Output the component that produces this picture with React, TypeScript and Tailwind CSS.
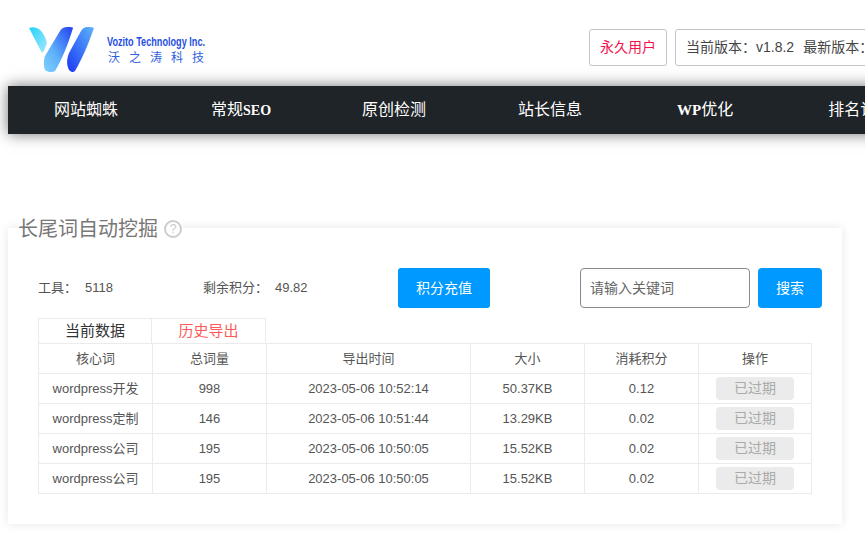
import React from 'react';

const navItems = [
  { pre: '', label: '网站蜘蛛', cls: 'mr-[1px]' },
  { pre: '', label: '常规', post: 'SEO', cls: '-mr-[1px]' },
  { pre: '', label: '原创检测', cls: '' },
  { pre: '', label: '站长信息', cls: 'mr-[3px]' },
  { pre: 'WP', label: '优化', cls: 'mr-[3px]' },
  { pre: '', label: '排名记录', cls: '' },
];

const rows = [
  { word: 'wordpress开发', total: 998, time: '2023-05-06 10:52:14', size: '50.37KB', cost: '0.12' },
  { word: 'wordpress定制', total: 146, time: '2023-05-06 10:51:44', size: '13.29KB', cost: '0.02' },
  { word: 'wordpress公司', total: 195, time: '2023-05-06 10:50:05', size: '15.52KB', cost: '0.02' },
  { word: 'wordpress公司', total: 195, time: '2023-05-06 10:50:05', size: '15.52KB', cost: '0.02' },
];

const colWidths = ['w-[114px]', 'w-[114px]', 'w-[204px]', 'w-[114px]', 'w-[114px]', 'w-[113px]'];

const Logo = () => (
  <svg width="180" height="50" viewBox="0 0 180 50" className="shrink-0">
    <defs>
      <linearGradient id="petal" x1="0" y1="0" x2="1" y2="1">
        <stop offset="0" stopColor="#22d3fb" />
        <stop offset="1" stopColor="#a5e6fd" />
      </linearGradient>
      <linearGradient id="mid" x1="1" y1="0" x2="0" y2="1">
        <stop offset="0" stopColor="#1f3ff0" />
        <stop offset="0.6" stopColor="#5fb0fb" />
        <stop offset="1" stopColor="#7fd0fd" />
      </linearGradient>
      <linearGradient id="right" x1="1" y1="0" x2="0" y2="1">
        <stop offset="0" stopColor="#5cb4fb" />
        <stop offset="1" stopColor="#1c37f5" />
      </linearGradient>
    </defs>
    <path d="M1 1 C7 -1 15 1 19 16 L16 24 C15 26 13.5 25.5 13 24 Z" fill="url(#petal)" />
    <path d="M39 0 C42 0 45 0 45 1 C40 18 33 34 27 44 C24 46 19 45 17 43 C15 38 16 32 17 29 L32 4 C34 1 36 0 39 0 Z" fill="url(#mid)" />
    <path d="M59 0 C62 0 65 0 66 1 C60 18 54 32 47 44 C45 46 43 45 41 43 C38 37 39 31 41 26 L53 4 C55 1 57 0 59 0 Z" fill="url(#right)" />
    <text x="79" y="19" textLength="98" lengthAdjust="spacingAndGlyphs" fontFamily="'Liberation Sans', sans-serif" fontWeight="700" fontSize="13.5" fill="#1f4fe0">Vozito Technology Inc.</text>
    <text x="80" y="35" textLength="96" fontFamily="'Noto Sans CJK SC', sans-serif" fontSize="12" fill="#2f62e0">沃之涛科技</text>
  </svg>
);

export default function App() {
  return (
    <div className="w-[865px] h-[544px] overflow-hidden bg-white text-[#555] text-[13px]" style={{ fontFamily: "'Liberation Sans', 'Noto Sans CJK SC', sans-serif" }}>
      {/* Header */}
      <div className="h-[86px] flex items-start pl-[28px] pt-[27px]">
        <Logo />
        <div className="ml-[381px] mt-[2px] flex items-center gap-[8px] shrink-0 text-[14px]">
          <span className="h-[37px] w-[78px] flex items-center justify-center border border-[#c4c4c4] rounded-[3px] text-[#f0134d]">永久用户</span>
          <span className="h-[37px] w-[300px] flex items-center pl-[10px] border border-[#c4c4c4] rounded-[3px] text-[#444] whitespace-nowrap">
            当前版本：v1.8.2<span className="ml-[9px]">最新版本：v1.8.2</span>
          </span>
        </div>
      </div>

      {/* Nav */}
      <div className="ml-[8px] h-[48px] w-[1000px] bg-[#1f2428] flex items-center pl-[46px] gap-[92px] text-white text-[16px] shadow-[0_0_14px_rgba(0,0,0,0.55)] whitespace-nowrap">
        {navItems.map((item) => (
          <span key={item.label} className={`shrink-0 ${item.cls}`}>
            {item.pre && <b className="font-bold text-[15px]" style={{ fontFamily: "'Liberation Serif', serif" }}>{item.pre}</b>}
            {item.label}
            {item.post && <b className="font-bold text-[14px]" style={{ fontFamily: "'Liberation Serif', serif" }}>{item.post}</b>}
          </span>
        ))}
      </div>

      {/* Card */}
      <div className="relative ml-[8px] mt-[94px] w-[834px] h-[296px] bg-white shadow-[0_0_10px_rgba(0,0,0,0.1)] pt-[40px] pl-[30px] pr-[20px]">
        <div className="absolute left-[10px] -top-[11px] flex items-center bg-white gap-[6px] text-[#777] text-[20px] leading-[24px] pr-[1px]">
          长尾词自动挖掘
          <span className="w-[18px] h-[18px] rounded-full border-2 border-[#ccc] text-[#ccc] text-[13px] leading-[14px] text-center">?</span>
        </div>

        <div className="flex items-center h-[40px]">
          <span className="w-[47px] shrink-0">工具：</span>
          <span className="w-[118px] shrink-0">5118</span>
          <span className="w-[72px] shrink-0">剩余积分：</span>
          <span className="w-[123px] shrink-0">49.82</span>
          <button className="w-[92px] h-[40px] shrink-0 bg-[#0099ff] text-white text-[14px] rounded-[3px]">积分充值</button>
          <input placeholder="请输入关键词" className="ml-[90px] w-[170px] h-[40px] shrink-0 border border-[#8a8a8a] rounded-[4px] px-[9px] text-[14px] placeholder:text-[#666] outline-none" />
          <button className="ml-[8px] w-[64px] h-[40px] shrink-0 bg-[#0099ff] text-white text-[14px] rounded-[4px]">搜索</button>
        </div>

        <div className="mt-[10px] flex h-[25px] text-[15px]">
          <span className="w-[114px] border border-b-0 border-[#ebebeb] flex items-center justify-center text-[#333]">当前数据</span>
          <span className="w-[114px] border border-b-0 border-l-0 border-[#ebebeb] flex items-center justify-center text-[#ff5a5a]">历史导出</span>
        </div>

        <table className="w-[773px] table-fixed border-collapse text-center">
          <thead>
            <tr className="h-[30px]">
              {['核心词', '总词量', '导出时间', '大小', '消耗积分', '操作'].map((h, i) => (
                <th key={h} className={`font-normal border border-[#ebebeb] ${colWidths[i]}`}>{h}</th>
              ))}
            </tr>
          </thead>
          <tbody>
            {rows.map((r, i) => (
              <tr key={i} className="h-[30px]">
                <td className="border border-[#ebebeb]">{r.word}</td>
                <td className="border border-[#ebebeb]">{r.total}</td>
                <td className="border border-[#ebebeb]">{r.time}</td>
                <td className="border border-[#ebebeb]">{r.size}</td>
                <td className="border border-[#ebebeb]">{r.cost}</td>
                <td className="border border-[#ebebeb]">
                  <span className="mx-auto w-[78px] h-[23px] flex items-center justify-center rounded-[4px] bg-[#ebebeb] text-[#aaa] text-[14px]">已过期</span>
                </td>
              </tr>
            ))}
          </tbody>
        </table>
      </div>
    </div>
  );
}
